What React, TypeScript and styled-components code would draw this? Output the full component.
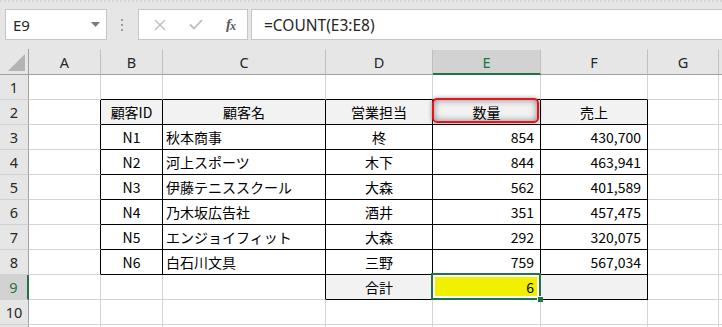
import styled, { createGlobalStyle } from "styled-components";

const GlobalStyle = createGlobalStyle`
  body {
    margin: 0;
    background: #ffffff;
    overflow: hidden;
  }
`;

const UI_FONT = `"Noto Sans", "Open Sans", sans-serif`;
const CELL_FONT = `"Noto Sans CJK JP", "Noto Sans", sans-serif`;
const GREEN = "#217346";

const Window = styled.div`
  width: 722px;
  height: 327px;
  overflow: hidden;
  background: #e6e6e6;
`;

const FormulaBar = styled.div`
  height: 49px;
  box-sizing: border-box;
  border-top: 2px dotted #d6d6d6;
  padding: 7px 0 0 5px;
  display: flex;
  align-items: flex-start;
`;

const Box = styled.div`
  height: 31px;
  box-sizing: border-box;
  background: #ffffff;
  border: 1px solid #c6c6c6;
  display: flex;
  align-items: center;
`;

const NameBox = styled(Box)`
  width: 102px;
  padding: 0 6px 0 7px;
  justify-content: space-between;
  font-family: ${UI_FONT};
  font-size: 15px;
  color: #262626;
`;

const Grip = styled.div`
  width: 31px;
  height: 31px;
  display: flex;
  align-items: center;
  justify-content: center;
`;

const FxBox = styled(Box)`
  width: 110px;
  padding: 0 12px 0 15px;
  justify-content: space-between;
`;

const Fx = styled.span`
  font-family: "Liberation Serif", serif;
  font-style: italic;
  font-weight: bold;
  font-size: 15px;
  color: #595959;
  letter-spacing: -1px;

  & small {
    font-size: 12px;
    position: relative;
    top: 1px;
  }
`;

const FormulaInput = styled(Box)`
  flex: 1;
  margin-left: 3px;
  padding-left: 12px;
  border-right: none;
  font-family: ${UI_FONT};
  font-size: 15.5px;
  color: #262626;
`;

const Sheet = styled.div`
  display: grid;
  grid-template-columns: 29px 72px 62px 163px 107px 108px 107px 71px 1fr;
  grid-template-rows: 26px repeat(11, 25px);
  background: #ffffff;
`;

const Corner = styled.div`
  background: #e6e6e6;
  border-right: 1px solid #9f9f9f;
  border-bottom: 1px solid #9f9f9f;
  display: flex;
  align-items: flex-end;
  justify-content: flex-end;
  padding: 0 3px 3px 0;
`;

const ColHead = styled.div<{ $active?: boolean }>`
  box-sizing: border-box;
  background: ${(p) => (p.$active ? "#d2d2d2" : "#e6e6e6")};
  border-top: 1px solid #e6e6e6;
  border-right: 1px solid #c0c0c0;
  border-bottom: ${(p) => (p.$active ? `2px solid ${GREEN}` : "1px solid #9f9f9f")};
  display: flex;
  align-items: center;
  justify-content: center;
  font-family: ${UI_FONT};
  font-size: 14.5px;
  color: ${(p) => (p.$active ? GREEN : "#262626")};
`;

const RowHead = styled.div<{ $active?: boolean }>`
  box-sizing: border-box;
  background: ${(p) => (p.$active ? "#d2d2d2" : "#e6e6e6")};
  border-right: ${(p) => (p.$active ? `2px solid ${GREEN}` : "1px solid #9f9f9f")};
  border-bottom: 1px solid #d0d0d0;
  display: flex;
  align-items: center;
  justify-content: center;
  font-family: ${UI_FONT};
  font-size: 14.5px;
  color: ${(p) => (p.$active ? GREEN : "#262626")};
`;

type Align = "left" | "center" | "right";

const Cell = styled.div<{
  $align: Align;
  $fill?: string;
  $darkRight?: boolean;
  $darkBottom?: boolean;
}>`
  position: relative;
  box-sizing: border-box;
  background: ${(p) => p.$fill ?? "#ffffff"};
  border-right: 1px solid ${(p) => (p.$darkRight ? "#000000" : "#d4d4d4")};
  border-bottom: 1px solid ${(p) => (p.$darkBottom ? "#000000" : "#d4d4d4")};
  display: flex;
  align-items: center;
  justify-content: ${(p) =>
    p.$align === "left" ? "flex-start" : p.$align === "right" ? "flex-end" : "center"};
  padding: ${(p) => (p.$align === "left" ? "0 0 0 3px" : p.$align === "right" ? "0 6px 0 0" : "0")};
  font-family: ${CELL_FONT};
  font-size: 14px;
  color: #000000;
  white-space: nowrap;
`;

const Highlight = styled.div`
  position: absolute;
  top: -2px;
  left: -1px;
  right: 1px;
  bottom: 1px;
  border: 2px solid #e4141c;
  border-radius: 5px;
  box-shadow: inset 0 0 7px rgba(0, 0, 0, 0.45), 0 0 4px rgba(0, 0, 0, 0.4);
  pointer-events: none;
  z-index: 2;
`;

const Selection = styled.div`
  position: absolute;
  top: -2px;
  left: -2px;
  right: -1px;
  bottom: -1px;
  border: 2px solid ${GREEN};
  box-shadow: inset 0 0 0 2px #ffffff;
  pointer-events: none;
  z-index: 3;
`;

const FillHandle = styled.div`
  position: absolute;
  right: -4px;
  bottom: -4px;
  width: 5px;
  height: 5px;
  background: ${GREEN};
  border-left: 1px solid #ffffff;
  border-top: 1px solid #ffffff;
`;

const Value = styled.span`
  position: relative;
  z-index: 4;
`;

const COLS = ["A", "B", "C", "D", "E", "F", "G", ""];
const ALIGN: Align[] = ["left", "center", "left", "center", "right", "right", "left", "left"];

const DATA: string[][] = [
  ["N1", "秋本商事", "柊", "854", "430,700"],
  ["N2", "河上スポーツ", "木下", "844", "463,941"],
  ["N3", "伊藤テニススクール", "大森", "562", "401,589"],
  ["N4", "乃木坂広告社", "酒井", "351", "457,475"],
  ["N5", "エンジョイフィット", "大森", "292", "320,075"],
  ["N6", "白石川文具", "三野", "759", "567,034"],
];
const HEADERS = ["顧客ID", "顧客名", "営業担当", "数量", "売上"];

// table occupies B2:F8 and D9:F9 (col index 0 = A)
function inTable(row: number, col: number) {
  if (row >= 2 && row <= 8 && col >= 1 && col <= 5) return true;
  if (row === 9 && col >= 3 && col <= 5) return true;
  return false;
}

function cellText(row: number, col: number): string {
  if (row === 2 && col >= 1 && col <= 5) return HEADERS[col - 1];
  if (row >= 3 && row <= 8 && col >= 1 && col <= 5) return DATA[row - 3][col - 1];
  if (row === 9 && col === 3) return "合計";
  if (row === 9 && col === 4) return "6";
  return "";
}

function cellFill(row: number, col: number): string | undefined {
  if (row === 9 && col === 4) return "#f0f000";
  if ((row === 2 || row === 9) && inTable(row, col)) return "#f2f2f2";
  return undefined;
}

function CloseIcon() {
  return (
    <svg width="12" height="12" viewBox="0 0 12 12">
      <path d="M1 1 L11 11 M11 1 L1 11" stroke="#bdbdbd" strokeWidth="1.4" fill="none" />
    </svg>
  );
}

function CheckIcon() {
  return (
    <svg width="14" height="11" viewBox="0 0 14 11">
      <path d="M1 5.5 L5 9.5 L13 1" stroke="#bdbdbd" strokeWidth="1.8" fill="none" />
    </svg>
  );
}

function DropArrow() {
  return (
    <svg width="9" height="5" viewBox="0 0 9 5">
      <polygon points="0,0 9,0 4.5,5" fill="#7a7a7a" />
    </svg>
  );
}

function GripDots() {
  return (
    <svg width="3" height="12" viewBox="0 0 3 12">
      <rect x="0" y="0" width="2" height="2" fill="#9a9a9a" />
      <rect x="0" y="5" width="2" height="2" fill="#9a9a9a" />
      <rect x="0" y="10" width="2" height="2" fill="#9a9a9a" />
    </svg>
  );
}

function CornerTriangle() {
  return (
    <svg width="17" height="17" viewBox="0 0 17 17">
      <polygon points="17,0 17,17 0,17" fill="#b4b4b4" />
    </svg>
  );
}

export default function App() {
  const rows = Array.from({ length: 11 }, (_, i) => i + 1);

  return (
    <Window>
      <GlobalStyle />
      <FormulaBar>
        <NameBox>
          <span>E9</span>
          <DropArrow />
        </NameBox>
        <Grip>
          <GripDots />
        </Grip>
        <FxBox>
          <CloseIcon />
          <CheckIcon />
          <Fx>
            f<small>x</small>
          </Fx>
        </FxBox>
        <FormulaInput>=COUNT(E3:E8)</FormulaInput>
      </FormulaBar>

      <Sheet>
        <Corner>
          <CornerTriangle />
        </Corner>
        {COLS.map((c, i) => (
          <ColHead key={`h${i}`} $active={c === "E"}>
            {c}
          </ColHead>
        ))}

        {rows.map((r) => [
          <RowHead key={`r${r}`} $active={r === 9}>
            {r <= 10 ? r : ""}
          </RowHead>,
          ...COLS.map((_, c) => {
            const isHeader = r === 2 && inTable(r, c);
            const darkRight = inTable(r, c) || inTable(r, c + 1);
            const darkBottom = inTable(r, c) || inTable(r + 1, c);
            const align: Align = isHeader || (r === 9 && c === 3) ? "center" : ALIGN[c];
            return (
              <Cell
                key={`c${r}-${c}`}
                $align={align}
                $fill={cellFill(r, c)}
                $darkRight={darkRight}
                $darkBottom={darkBottom}
              >
                <Value>{cellText(r, c)}</Value>
                {r === 2 && c === 4 && <Highlight />}
                {r === 9 && c === 4 && (
                  <Selection>
                    <FillHandle />
                  </Selection>
                )}
              </Cell>
            );
          }),
        ])}
      </Sheet>
    </Window>
  );
}
